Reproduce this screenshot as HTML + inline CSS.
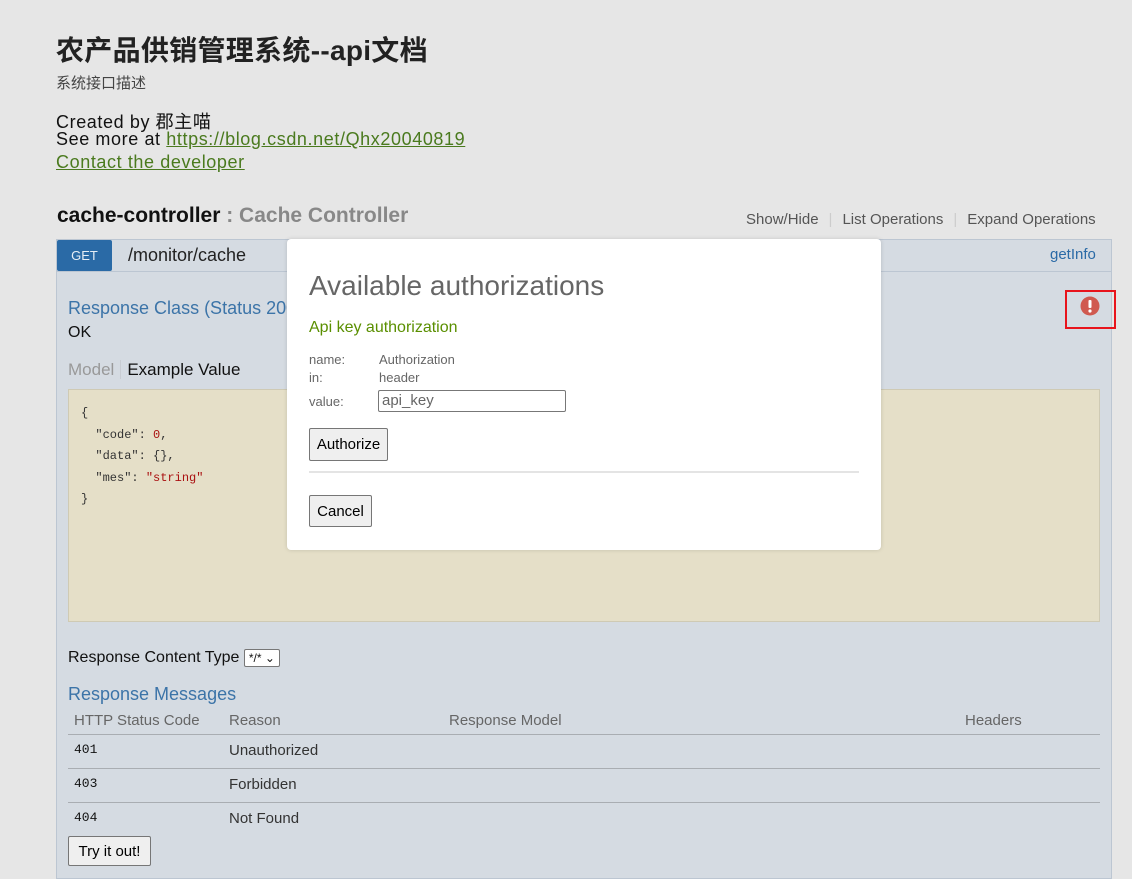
<!DOCTYPE html>
<html><head><meta charset="utf-8"><style>
*{margin:0;padding:0;box-sizing:border-box}
body{width:1132px;height:854px;overflow:hidden;background:#e6e6e6;font-family:"Liberation Sans","Noto Sans CJK SC",sans-serif;color:#111;position:relative}
.a{position:absolute;white-space:nowrap}
a{color:#4a7a1e}
.cr{font-size:18px;line-height:20px;letter-spacing:0.6px}
.panel{position:absolute;left:56px;top:239px;width:1056px;height:640px;background:#d5dbe2;border:1px solid #bcc6d2}
.hdr{position:absolute;left:0;top:0;width:1054px;height:32px;border-bottom:1px solid #bcc6d2}
.get{position:absolute;left:0;top:0;width:55px;height:31px;background:#2a6aa6;color:#e6eef6;font-size:13px;text-align:center;line-height:32px;border-radius:2px}
.code{position:absolute;left:11px;top:149px;width:1032px;height:233px;background:#e5dfc8;border:1px solid #cfcab4;font-family:"Liberation Mono",monospace;font-size:12px;line-height:21.5px;padding:13px 12px;color:#333}
.s{color:#a11}
.row{position:absolute;left:11px;width:1032px;border-top:1px solid #a9adb2;height:34px}
.modal{position:absolute;left:287px;top:239px;width:594px;height:311px;background:#fff;border-radius:4px;box-shadow:0 0 4px rgba(0,0,0,.15)}
.btn{position:absolute;background:#efefef;border:1px solid #767676;border-radius:2px;font-size:15px;display:flex;align-items:center;justify-content:center;color:#000}
.gray{color:#666}
</style></head><body>
<div class="a" style="left:56px;top:29px;font-size:28px;font-weight:bold;color:#222;letter-spacing:0.3px">农产品供销管理系统--api文档</div>
<div class="a" style="left:56px;top:72px;font-size:15px;color:#444">系统接口描述</div>
<div class="a cr" style="left:56px;top:112px">Created by 郡主喵</div>
<div class="a cr" style="left:56px;top:129px">See more at <a href="#">https://blog.csdn.net/Qhx20040819</a></div>
<div class="a cr" style="left:56px;top:152px"><a href="#">Contact the developer</a></div>
<div class="a" style="left:57px;top:204px;font-size:21px;font-weight:bold;color:#111">cache-controller <span style="color:#888">: Cache Controller</span></div>
<div class="a" style="left:746px;top:211px;font-size:15px;color:#555">Show/Hide<span style="color:#ccc;margin:0 10px">|</span>List Operations<span style="color:#ccc;margin:0 10px">|</span>Expand Operations</div>
<div class="panel">
 <div class="hdr"><div class="get">GET</div>
 <div class="a" style="left:71px;top:5px;font-size:18px;color:#222">/monitor/cache</div>
 <div class="a" style="left:993px;top:6px;font-size:15px;color:#2a6aa6">getInfo</div></div>
 <div class="a" style="left:11px;top:58px;font-size:18px;color:#3c74a8">Response Class (Status 200)</div>
 <div class="a" style="left:11px;top:84px;font-size:16px">OK</div>
 <div class="a" style="left:11px;top:120px;font-size:17px"><span style="color:#999">Model</span><span style="border-left:1px solid #c8ccd2;margin:0 6px;"></span>Example Value</div>
 <div class="code">{<br>&nbsp;&nbsp;"code": <span class="s">0</span>,<br>&nbsp;&nbsp;"data": {},<br>&nbsp;&nbsp;"mes": <span class="s">"string"</span><br>}</div>
 <div class="a" style="left:11px;top:409px;font-size:16px">Response Content Type <span style="display:inline-block;border:1px solid #777;background:#fff;font-size:12px;padding:1px 4px;border-radius:2px">*/* ⌄</span></div>
 <div class="a" style="left:11px;top:444px;font-size:18px;color:#3c74a8">Response Messages</div>
 <div class="a gray" style="left:17px;top:472px;font-size:15px">HTTP Status Code</div>
 <div class="a gray" style="left:172px;top:472px;font-size:15px">Reason</div>
 <div class="a gray" style="left:392px;top:472px;font-size:15px">Response Model</div>
 <div class="a gray" style="left:908px;top:472px;font-size:15px">Headers</div>
 <div class="row" style="top:494px"><span class="a" style="left:6px;top:7px;font-family:'Liberation Mono',monospace;font-size:13px">401</span><span class="a" style="left:161px;top:7px;font-size:15px;color:#333">Unauthorized</span></div>
 <div class="row" style="top:528px"><span class="a" style="left:6px;top:7px;font-family:'Liberation Mono',monospace;font-size:13px">403</span><span class="a" style="left:161px;top:7px;font-size:15px;color:#333">Forbidden</span></div>
 <div class="row" style="top:562px"><span class="a" style="left:6px;top:7px;font-family:'Liberation Mono',monospace;font-size:13px">404</span><span class="a" style="left:161px;top:7px;font-size:15px;color:#333">Not Found</span></div>
 <div class="btn" style="left:11px;top:596px;width:83px;height:30px">Try it out!</div>
</div>
<div class="a" style="left:1065px;top:290px;width:51px;height:39px;border:2px solid #e8141c"></div>
<svg class="a" style="left:1080px;top:296px" width="20" height="20"><circle cx="10" cy="10" r="9.5" fill="#d05a50"/><rect x="8.5" y="4" width="3" height="8" rx="1" fill="#fff"/><circle cx="10" cy="15" r="1.6" fill="#fff"/></svg>
<div class="modal">
 <div class="a" style="left:22px;top:31px;font-size:28px;color:#666">Available authorizations</div>
 <div class="a" style="left:22px;top:80px;font-size:16px;color:#5a8f00">Api key authorization</div>
 <div class="a gray" style="left:22px;top:112px;font-size:13px;line-height:18px">name:<br>in:</div>
 <div class="a gray" style="left:92px;top:112px;font-size:13px;line-height:18px">Authorization<br>header</div>
 <div class="a gray" style="left:22px;top:155px;font-size:13px">value:</div>
 <div class="a" style="left:91px;top:151px;width:188px;height:22px;border:1px solid #777;border-radius:2px;font-size:15px;color:#666;padding-left:3px;line-height:20px">api_key</div>
 <div class="btn" style="left:22px;top:189px;width:79px;height:33px">Authorize</div>
 <div class="a" style="left:22px;top:232px;width:550px;height:2px;background:#e4e4e4"></div>
 <div class="btn" style="left:22px;top:256px;width:63px;height:32px">Cancel</div>
</div>
</body></html>
